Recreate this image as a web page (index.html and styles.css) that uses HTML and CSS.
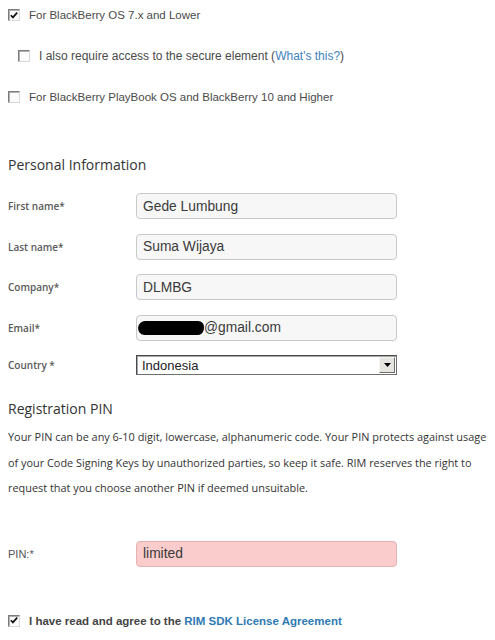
FILE: index.html
```html
<!DOCTYPE html>
<html>
<head>
<meta charset="utf-8">
<link rel="stylesheet" href="styles.css">
</head>
<body>
<div class="page">
  <div class="opt">
    <span class="cb"><svg viewBox="0 0 11 11" width="11" height="11"><path d="M2 5.2 L4.3 7.6 L9 2.4" fill="none" stroke="#111" stroke-width="1.9"/></svg></span>
    <span>For BlackBerry OS 7.x and Lower</span>
  </div>
  <div class="opt sub">
    <span class="cb"></span>
    <span>I also require access to the secure element (<a class="link">What's this?</a>)</span>
  </div>
  <div class="opt">
    <span class="cb"></span>
    <span>For BlackBerry PlayBook OS and BlackBerry 10 and Higher</span>
  </div>

  <h2 class="heading first">Personal Information</h2>

  <div class="form">
    <div class="row"><span class="lbl">First name*</span><div class="field">Gede Lumbung</div></div>
    <div class="row"><span class="lbl">Last name*</span><div class="field">Suma Wijaya</div></div>
    <div class="row"><span class="lbl">Company*</span><div class="field">DLMBG</div></div>
    <div class="row"><span class="lbl">Email*</span><div class="field"><span class="blot"></span>@gmail.com</div></div>
    <div class="row short"><span class="lbl">Country *</span><div class="select"><span class="sel-text">Indonesia</span><span class="sel-btn"><svg viewBox="0 0 7 4" width="7" height="4"><path d="M0 0 H7 L3.5 4 Z" fill="#000"/></svg></span></div></div>
  </div>

  <h2 class="heading second">Registration PIN</h2>

  <p class="info">Your PIN can be any 6-10 digit, lowercase, alphanumeric code. Your PIN protects against usage of your Code Signing Keys by unauthorized parties, so keep it safe. RIM reserves the right to request that you choose another PIN if deemed unsuitable.</p>

  <div class="row pin"><span class="lbl lbl-arial">PIN:*</span><div class="field error">limited</div></div>

  <div class="opt agree">
    <span class="cb"><svg viewBox="0 0 11 11" width="11" height="11"><path d="M2 5.2 L4.3 7.6 L9 2.4" fill="none" stroke="#111" stroke-width="1.9"/></svg></span>
    <span>I have read and agree to the <a class="link strong">RIM SDK License Agreement</a></span>
  </div>
</div>
</body>
</html>
```

FILE: styles.css
```css
html, body {
  margin: 0;
  padding: 0;
  background: #ffffff;
}

.page {
  padding: 5px 7px 0 8px;
  font-family: "Liberation Sans", Arial, sans-serif;
  color: #444;
}

.opt {
  display: flex;
  align-items: center;
  gap: 9px;
  height: 20px;
  margin-bottom: 21px;
  font-size: 11.5px;
  color: #4a4a4a;
}

.opt.sub {
  padding-left: 10px;
  font-size: 12px;
}

.cb {
  box-sizing: border-box;
  width: 12px;
  height: 12px;
  flex: 0 0 auto;
  border: 1px solid;
  border-color: #7c7c7c #d8d8d8 #d8d8d8 #7c7c7c;
  box-shadow: inset 1px 1px 0 #b0b0b0;
  background: #fbfbfb;
  display: flex;
  align-items: center;
  justify-content: center;
}

.cb svg {
  display: block;
}

.link {
  color: #3d83bb;
  text-decoration: none;
}

.link.strong {
  color: #2e79b3;
}

.heading {
  margin: 0;
  font-family: "Open Sans", "Noto Sans", sans-serif;
  font-weight: 400;
  font-size: 14px;
  line-height: 20px;
  color: #333;
}

.heading.first {
  margin-top: 48px;
  margin-bottom: 18px;
}

.heading.second {
  margin-top: 24px;
}

.form {
  display: flex;
  flex-direction: column;
  gap: 14.6px;
}

.row {
  display: flex;
  align-items: center;
  height: 26px;
}

.row.short {
  height: 20px;
}

.lbl {
  width: 128px;
  flex: 0 0 auto;
  font-family: "Open Sans", "Noto Sans", sans-serif;
  font-weight: 600;
  font-size: 10px;
  color: #5a5a5a;
}

.lbl-arial {
  font-family: "Liberation Sans", Arial, sans-serif;
  font-weight: 400;
  font-size: 11px;
  color: #555;
}

.field {
  box-sizing: border-box;
  width: 261px;
  height: 26px;
  border: 1px solid #c9c9c9;
  border-radius: 4px;
  background: #f7f7f7;
  padding: 0 6px;
  display: flex;
  align-items: center;
  font-size: 13.8px;
  color: #3a3a3a;
}

.field.error {
  background: #fbcccc;
  border-color: #e3b3b3;
}

.blot {
  display: inline-block;
  width: 66px;
  height: 14px;
  margin-left: -5px;
  background: #000;
  border-radius: 7px 8px 6px 9px;
  transform: skewX(-8deg);
}

.select {
  box-sizing: border-box;
  width: 261px;
  height: 20px;
  border: 1px solid #6f6f6f;
  border-top-color: #4a4a4a;
  border-left-color: #4a4a4a;
  box-shadow: inset 1px 1px 0 #a8a8a8;
  background: #fff;
  display: flex;
  align-items: center;
  justify-content: space-between;
  padding: 1px 1px 1px 5px;
  font-size: 13px;
  color: #222;
}

.sel-btn {
  box-sizing: border-box;
  width: 16px;
  height: 16px;
  background: #e6e4df;
  border: 1px solid;
  border-color: #f4f4f4 #6f6f6f #6f6f6f #f4f4f4;
  display: flex;
  align-items: center;
  justify-content: center;
}

.sel-btn svg {
  display: block;
}

.info {
  margin: 5px 0 0 0;
  font-family: "Open Sans", "Noto Sans", sans-serif;
  font-size: 10.9px;
  line-height: 25.5px;
  color: #333;
}

.row.pin {
  margin-top: 40px;
}

.opt.agree {
  margin-top: 44px;
  font-weight: 700;
  font-size: 11.5px;
  color: #444;
}
```
